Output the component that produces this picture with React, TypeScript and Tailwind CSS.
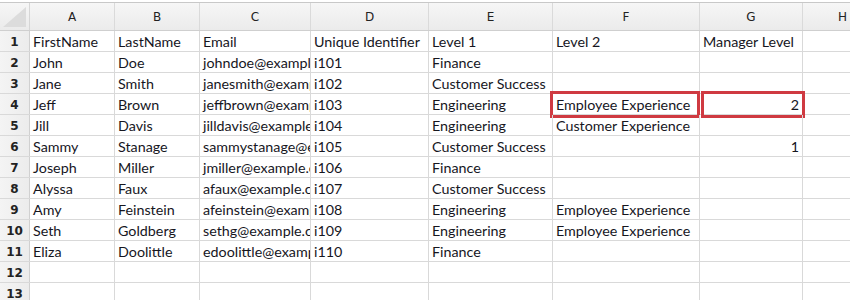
const columns = [
  { key: "A", width: "w-[85px]" },
  { key: "B", width: "w-[85px]" },
  { key: "C", width: "w-[111px]" },
  { key: "D", width: "w-[118px]" },
  { key: "E", width: "w-[124px]" },
  { key: "F", width: "w-[147px]" },
  { key: "G", width: "w-[103px]" },
  { key: "H", width: "w-[80px]" },
];

const rows: string[][] = [
  ["FirstName", "LastName", "Email", "Unique Identifier", "Level 1", "Level 2", "Manager Level", ""],
  ["John", "Doe", "johndoe@example.com", "i101", "Finance", "", "", ""],
  ["Jane", "Smith", "janesmith@example.com", "i102", "Customer Success", "", "", ""],
  ["Jeff", "Brown", "jeffbrown@example.com", "i103", "Engineering", "Employee Experience", "2", ""],
  ["Jill", "Davis", "jilldavis@example.com", "i104", "Engineering", "Customer Experience", "", ""],
  ["Sammy", "Stanage", "sammystanage@example.com", "i105", "Customer Success", "", "1", ""],
  ["Joseph", "Miller", "jmiller@example.com", "i106", "Finance", "", "", ""],
  ["Alyssa", "Faux", "afaux@example.com", "i107", "Customer Success", "", "", ""],
  ["Amy", "Feinstein", "afeinstein@example.com", "i108", "Engineering", "Employee Experience", "", ""],
  ["Seth", "Goldberg", "sethg@example.com", "i109", "Engineering", "Employee Experience", "", ""],
  ["Eliza", "Doolittle", "edoolittle@example.com", "i110", "Finance", "", "", ""],
  ["", "", "", "", "", "", "", ""],
  ["", "", "", "", "", "", "", ""],
];

// cells in column G hold numbers, right aligned like Excel
const isNumber = (v: string) => /^\d+$/.test(v);

export default function App() {
  return (
    <div className="w-[850px] h-[300px] overflow-hidden bg-white pt-[2px] font-['Lato',sans-serif] text-[14.3px] text-[#16161e]">
      <div className="border-t border-[#c8c8c8]">
        {/* column header */}
        <div className="flex h-[28px] bg-gradient-to-b from-[#f6f6f6] to-[#ebebeb] border-b border-[#cfcfcf]">
          <div className="relative w-[30px] shrink-0 border-r border-[#d6d6d6]">
            <svg className="absolute left-[2px] top-[3px]" width="25" height="22" viewBox="0 0 25 22">
              <polygon points="1,21 24,1 24,21" fill="#dcdcdc" />
            </svg>
          </div>
          {columns.map((col) => (
            <div
              key={col.key}
              className={`${col.width} shrink-0 border-r border-[#dadada] flex items-center justify-center pt-[1px] font-['DejaVu_Sans',sans-serif] text-[12px] text-[#222]`}
            >
              {col.key}
            </div>
          ))}
        </div>

        {rows.map((row, r) => (
          <div key={r} className="flex h-[21px] border-b border-[#d9d9d9]">
            <div className="w-[30px] shrink-0 bg-gradient-to-r from-[#f4f4f4] to-[#ececec] border-r border-[#d0d0d0] flex items-center justify-center pt-[1px] font-['DejaVu_Sans',sans-serif] text-[12px] font-semibold text-[#222]">
              {r + 1}
            </div>
            {row.map((val, c) => (
              <div key={c} className={`${columns[c].width} shrink-0 relative border-r border-[#d9d9d9]`}>
                <div
                  className={`h-full flex items-center px-[3px] pt-[1px] whitespace-nowrap overflow-hidden ${isNumber(val) ? "justify-end" : ""}`}
                >
                  {val}
                </div>
                {r === 3 && c === 5 && (
                  <div className="absolute left-[-3px] top-[-3px] w-[150px] h-[27px] border-[3px] border-[#cf3a41]" />
                )}
                {r === 3 && c === 6 && (
                  <div className="absolute left-[1px] top-[-3px] w-[104px] h-[27px] border-[3px] border-[#cf3a41]" />
                )}
              </div>
            ))}
          </div>
        ))}
      </div>
    </div>
  );
}
